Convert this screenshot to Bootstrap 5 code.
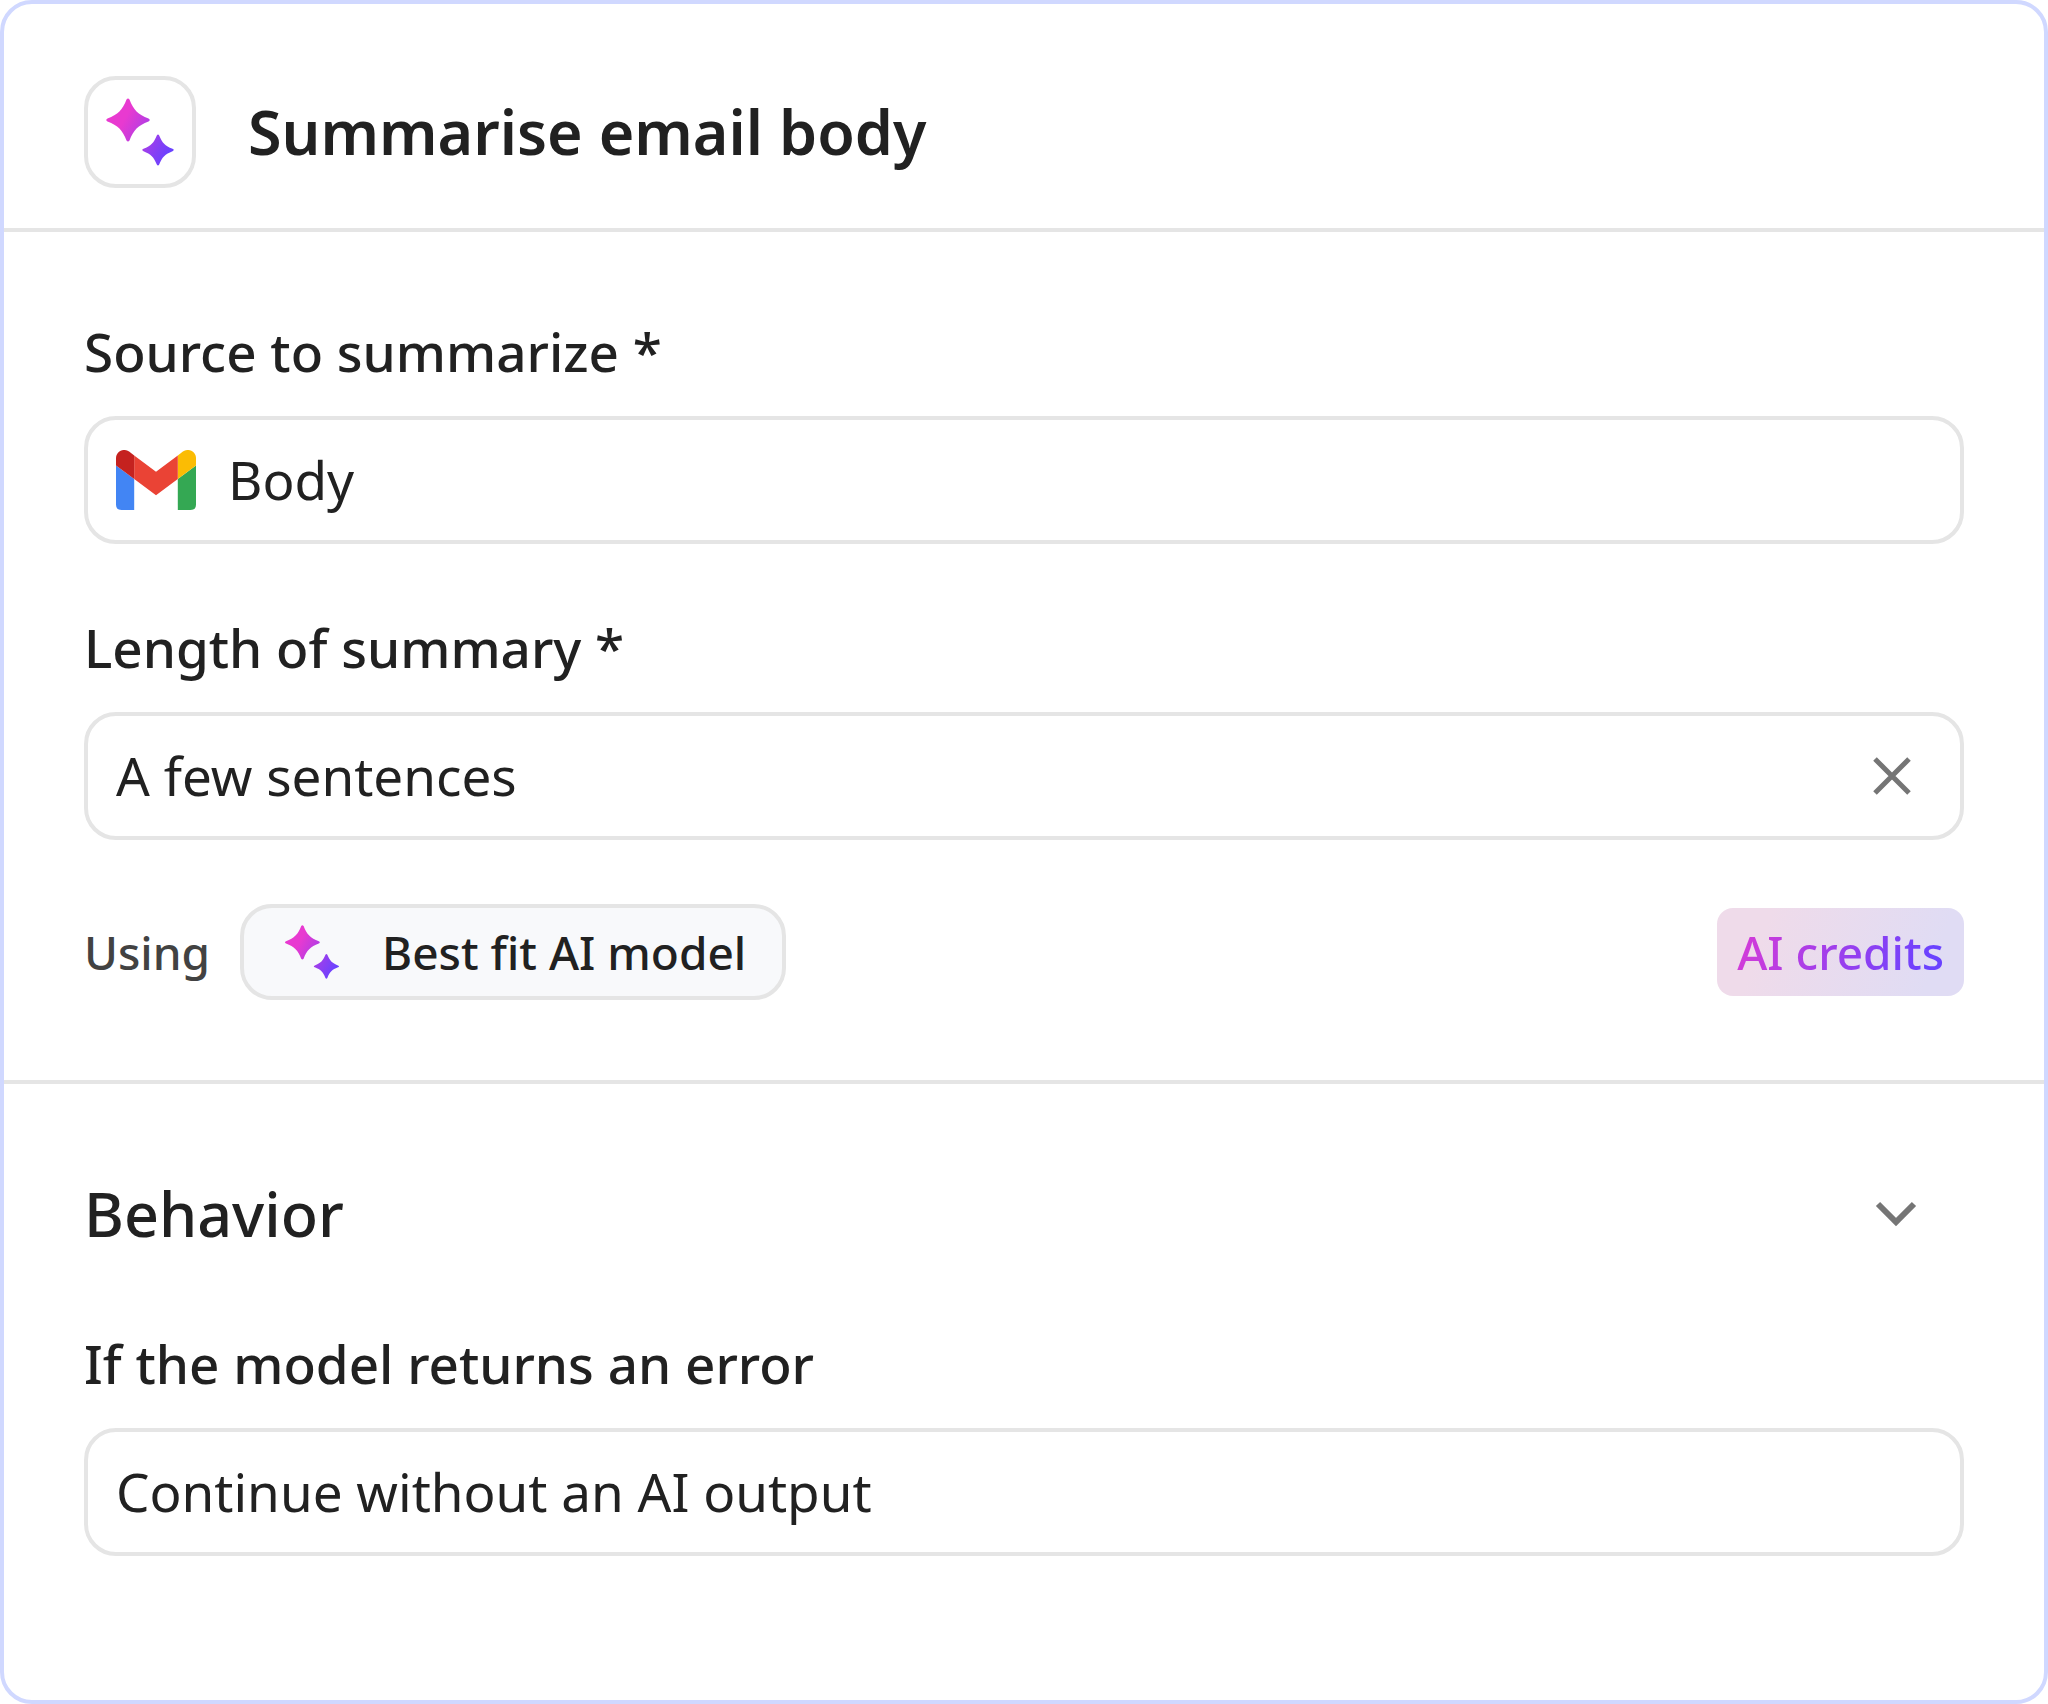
<!DOCTYPE html>
<html lang="en">
<head>
<meta charset="utf-8">
<meta name="viewport" content="width=device-width, initial-scale=1">
<title>Summarise email body</title>
<link href="https://cdn.jsdelivr.net/npm/bootstrap@5.3.0/dist/css/bootstrap.min.css" rel="stylesheet">
<style>
  :root { --line: #e5e5e5; --ink: #212121; --pad-x: 80px; }
  body { font-family: "Noto Sans", sans-serif; color: var(--ink); background: #fff; }
  .panel { border: 4px solid #d0d8ff; border-radius: 32px; background: #fff; }
  .panel-head { padding: 72px var(--pad-x) 40px; gap: 52px; border-bottom: 4px solid var(--line); }
  .tile { padding: 12px; border: 4px solid var(--line); border-radius: 32px; }
  .tile svg { width: 80px; height: 80px; }
  .title { font-size: 61px; line-height: 80px; font-weight: 600; }
  .section-main { padding: 84px var(--pad-x) 80px; border-bottom: 4px solid var(--line); }
  .section-more { padding: 90px var(--pad-x) 80px; }
  .section-title { font-size: 61px; line-height: 80px; font-weight: 500; color: var(--ink); }
  .field-label { font-size: 53px; line-height: 72px; font-weight: 500; margin-bottom: 28px; }
  .field-group + .field-group { margin-top: 68px; }
  .field-box { height: 128px; padding: 0 28px; gap: 32px; border: 4px solid var(--line); border-radius: 32px; }
  .field-box input { font-size: 53px; line-height: 72px; color: var(--ink); outline: 0; min-width: 0; }
  .gmail { width: 80px; height: 60px; }
  .icon-btn { width: 80px; height: 80px; color: #757575; }
  .icon-btn svg, .toggle svg { width: 80px; height: 80px; display: block; }
  .toggle { color: #757575; padding-right: 28px; }
  .more-fields { padding-top: 74px; }
  .model-row { margin-top: 64px; gap: 30px; font-size: 46px; line-height: 64px; font-weight: 500; }
  .using { color: #424242; }
  .chip { height: 96px; padding: 0 36px; gap: 38px; border: 4px solid var(--line); border-radius: 32px; background: #f8f9fb; color: var(--ink); font-weight: 500; }
  .chip svg { width: 64px; height: 64px; }
  .credits { height: 88px; padding: 0 20px; border-radius: 16px; background: linear-gradient(110deg, #efdbea 20%, #e0dcf4 85%); }
  .credits span { background: linear-gradient(110deg, #d93bd6, #6a42ff 90%); -webkit-background-clip: text; background-clip: text; color: transparent; }
</style>
</head>
<body>
<svg width="0" height="0" class="position-absolute" aria-hidden="true">
  <defs>
    <linearGradient id="spark-fill" gradientUnits="userSpaceOnUse" x1="18" y1="26" x2="72" y2="56">
      <stop offset="0.1" stop-color="#e83ad0"/><stop offset="1" stop-color="#6a42ff"/>
    </linearGradient>
    <symbol id="sparkles" viewBox="0 0 80 80">
      <path fill="url(#spark-fill)" d="M26.500 7.500Q28 5.500 29.500 7.500C33.500 18 38 22.500 48.500 26.500Q51 28 48.500 29.500C38 33.500 33.500 38 29.500 48.500Q28 50.500 26.500 48.500C22.500 38 18 33.500 7.500 29.500Q5 28 7.500 26.500C18 22.500 22.500 18 26.500 7.500Z"/>
      <path fill="url(#spark-fill)" d="M56.800 43.500Q58 41.500 59.200 43.500C62.200 51 65 53.800 72.500 56.800Q75 58 72.500 59.200C65 62.200 62.200 65 59.200 72.500Q58 74.500 56.800 72.500C53.800 65 51 62.200 43.500 59.200Q41 58 43.500 56.800C51 53.800 53.800 51 56.800 43.500Z"/>
    </symbol>
  </defs>
</svg>

<main class="panel min-vh-100">
  <header class="panel-head d-flex align-items-center">
    <div class="tile flex-shrink-0"><svg class="d-block" aria-hidden="true"><use href="#sparkles"/></svg></div>
    <h1 class="title mb-0">Summarise email body</h1>
  </header>

  <section class="section-main">
    <div class="field-group">
      <label class="field-label d-block" for="source">Source to summarize *</label>
      <div class="field-box d-flex align-items-center">
        <svg class="gmail flex-shrink-0" viewBox="0 0 80 60" aria-hidden="true">
          <path fill="#4285f4" d="M5.500 60H18.200V29L0 15.500V54.500Q0 60 5.500 60Z"/>
          <path fill="#34a853" d="M61.800 60H74.500Q80 60 80 54.500V15.500L61.800 29Z"/>
          <path fill="#fbbc04" d="M61.800 5.500V29L80 15.500V8.200C80 1.400 72.300-2.400 66.900 1.600Z"/>
          <path fill="#ea4335" d="M18.200 29V5.500L40 21.800L61.800 5.500V29L40 45.300Z"/>
          <path fill="#c5221f" d="M0 8.200V15.500L18.200 29V5.500L13.100 1.600C7.700-2.400 0 1.400 0 8.200Z"/>
        </svg>
        <input class="flex-grow-1 border-0 bg-transparent p-0" id="source" type="text" value="Body">
      </div>
    </div>

    <div class="field-group">
      <label class="field-label d-block" for="length">Length of summary *</label>
      <div class="field-box d-flex align-items-center">
        <input class="flex-grow-1 border-0 bg-transparent p-0" id="length" type="text" value="A few sentences">
        <button class="icon-btn btn border-0 p-0 flex-shrink-0" type="button" aria-label="Clear">
          <svg viewBox="0 0 80 80" fill="none" stroke="currentColor" stroke-width="5" aria-hidden="true"><path d="M23 23L57 57M57 23L23 57"/></svg>
        </button>
      </div>
    </div>

    <div class="model-row d-flex align-items-center">
      <span class="using">Using</span>
      <button class="chip d-flex align-items-center" type="button">
        <svg aria-hidden="true"><use href="#sparkles"/></svg>Best fit AI model
      </button>
      <div class="credits d-flex align-items-center ms-auto"><span>AI credits</span></div>
    </div>
  </section>

  <section class="section-more">
    <h2 class="mb-0">
      <button class="toggle btn border-0 rounded-0 w-100 py-0 ps-0 d-flex align-items-center justify-content-between" type="button" data-bs-toggle="collapse" data-bs-target="#behavior" aria-expanded="true" aria-controls="behavior">
        <span class="section-title">Behavior</span>
        <svg viewBox="0 0 80 80" fill="none" stroke="currentColor" stroke-width="6" aria-hidden="true"><path d="M22 30L40 48L58 30"/></svg>
      </button>
    </h2>
    <div class="collapse show" id="behavior">
      <div class="more-fields">
        <label class="field-label d-block" for="on-error">If the model returns an error</label>
        <div class="field-box d-flex align-items-center">
          <input class="flex-grow-1 border-0 bg-transparent p-0" id="on-error" type="text" value="Continue without an AI output">
        </div>
      </div>
    </div>
  </section>
</main>
<script src="https://cdn.jsdelivr.net/npm/bootstrap@5.3.0/dist/js/bootstrap.bundle.min.js"></script>
</body>
</html>
